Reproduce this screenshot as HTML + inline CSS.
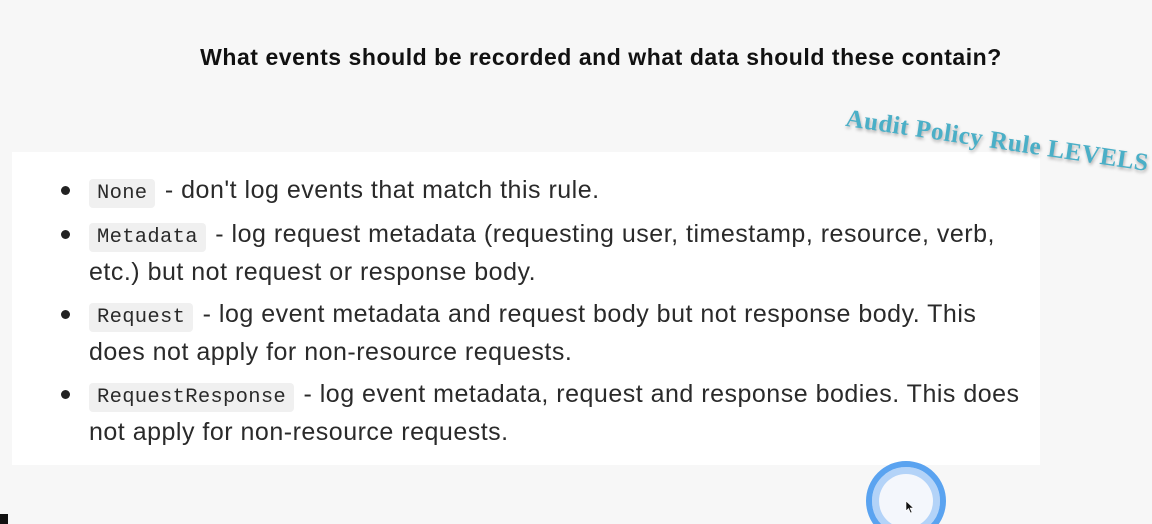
<!DOCTYPE html>
<html><head><style>
html,body{margin:0;padding:0;width:1152px;height:524px;overflow:hidden}
body{background:#f7f7f7;position:relative;font-family:"Liberation Sans",sans-serif;color:#222}
.title{position:absolute;left:0;width:1202px;top:44px;text-align:center;font-weight:bold;font-size:23px;letter-spacing:.55px;color:#111}
.audit{position:absolute;z-index:5;left:848px;top:105px;font-family:"Liberation Serif",serif;font-weight:bold;font-size:25px;color:#4aafc7;transform:rotate(8.5deg);transform-origin:0 0;text-shadow:1px 2px 3px rgba(0,0,0,.3);white-space:nowrap;letter-spacing:.5px}
.panel{position:absolute;left:12px;top:152px;width:1028px;height:313px;background:#fff}
.li{position:absolute;left:89px;font-size:25px;letter-spacing:.5px;line-height:35px;color:#2a2a2a;white-space:nowrap}
.dot{position:absolute;left:61px;width:9px;height:9px;border-radius:50%;background:#222}
code{font-family:"Liberation Mono",monospace;font-size:20.5px;letter-spacing:.3px;background:#f0f0f0;border-radius:4px;padding:3px 8px;margin-right:2px}
.circ{position:absolute;left:866px;top:461px;width:68px;height:68px;border-radius:50%;border:6px solid #5aa3f0;background:#f4f7fc;box-shadow:inset 0 0 0 7px #b3d3f8}
.blk{position:absolute;left:0;top:514px;width:8px;height:10px;background:#111}
</style></head><body>
<div class="title">What events should be recorded and what data should these contain?</div>
<div class="panel"></div>
<div class="audit">Audit Policy Rule LEVELS</div>
<div class="dot" style="top:186px"></div>
<div class="li" style="top:173px"><code>None</code> - don't log events that match this rule.</div>
<div class="dot" style="top:230px"></div>
<div class="li" style="top:217px"><code>Metadata</code> - log request metadata (requesting user, timestamp, resource, verb,<br>etc.) but not request or response body.</div>
<div class="dot" style="top:310px"></div>
<div class="li" style="top:297px"><code>Request</code> - log event metadata and request body but not response body. This<br>does not apply for non-resource requests.</div>
<div class="dot" style="top:390px"></div>
<div class="li" style="top:377px"><code>RequestResponse</code> - log event metadata, request and response bodies. This does<br>not apply for non-resource requests.</div>
<div class="circ"></div>
<svg style="position:absolute;left:905px;top:500px" width="10" height="14" viewBox="0 0 10 14"><path d="M1 1 L1 11 L3.5 8.5 L5.5 13 L7 12.3 L5 8 L8.5 8 Z" fill="#111" stroke="#fff" stroke-width=".6"/></svg>
<div class="blk"></div>
</body></html>
